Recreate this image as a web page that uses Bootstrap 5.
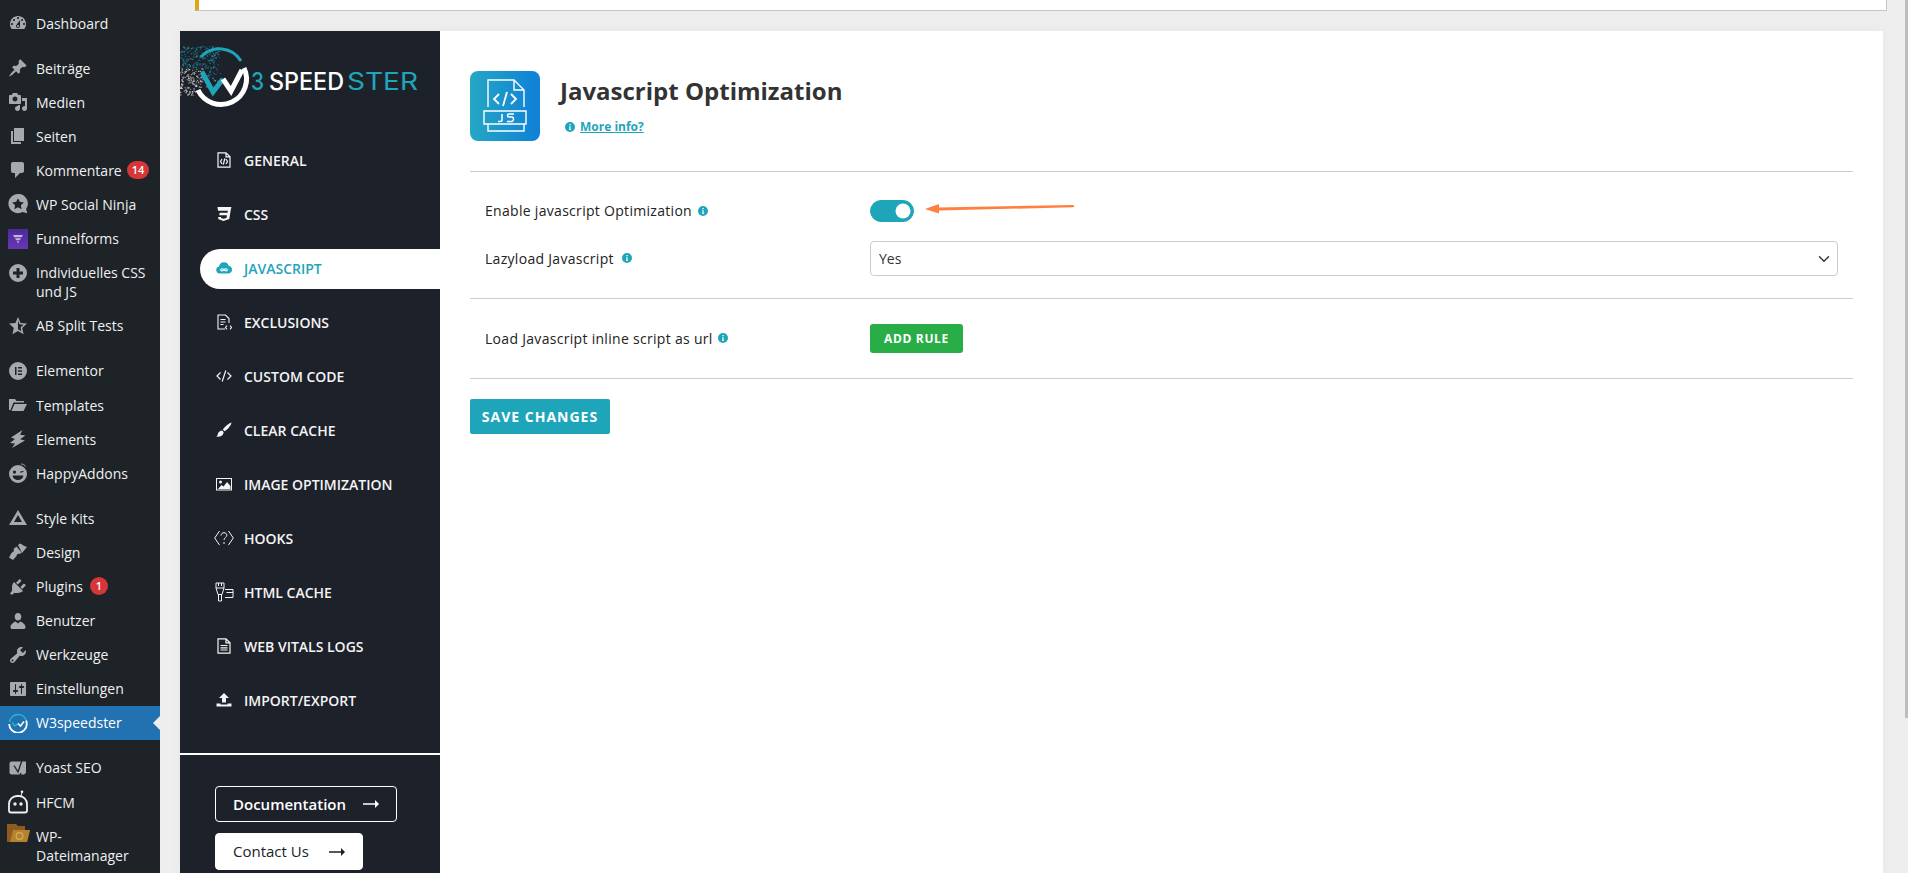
<!DOCTYPE html>
<html lang="de">
<head>
<meta charset="utf-8">
<title>W3speedster</title>
<link href="https://cdn.jsdelivr.net/npm/bootstrap@5.3.0/dist/css/bootstrap.min.css" rel="stylesheet">
<style>
html,body{height:873px;overflow:hidden;}
body{background:#eeeeee;font-family:"Open Sans","Noto Sans",sans-serif;color:#212529;position:relative;}
.wp-side{width:160px;height:873px;background:#1d2327;flex:none;padding-top:6px;overflow:hidden;}
.wp-item{display:flex;color:#f0f0f1;font-size:14px;line-height:19.1px;padding:7.5px 4px 7.5px 36px;position:relative;text-decoration:none;}
.wp-item.sep{margin-top:11px;}
.wp-item .wi{position:absolute;left:8px;top:7px;width:20px;height:20px;fill:#a7aaad;}
.wp-item.on{background:#2271b1;color:#fff;}
.wp-item.on::after{content:"";position:absolute;right:0;top:10px;border:7px solid transparent;border-right-color:#eeeeee;border-left:0;}
.wp-count{display:inline-block;background:#d63638;color:#fff;font-size:11px;font-weight:600;height:18px;line-height:18px;min-width:18px;padding:0 5px;border-radius:9px;text-align:center;margin-left:5px;}
.wp-count.one{padding:0;margin-left:7px;}
.page-wrap{flex:1;min-width:0;padding-left:20px;}
.top-note{margin-left:15px;width:1692px;height:11px;background:#fff;border:1px solid #c3c4c7;border-top:0;border-left:4px solid #dba617;}
.tool-panel{margin-top:20px;width:1703px;height:842px;background:#fff;box-shadow:0 0 12px rgba(0,0,0,.04);}
.tool-nav{width:260px;flex:none;background:#1d212a;height:842px;}
.logo-svg{display:block;margin-top:9px;width:260px;height:70px;}
.tool-links{margin-top:31px;padding-left:20px;gap:14px;}
.tool-link{display:flex;align-items:center;gap:12px;height:40px;padding:0 0 2px 16px;color:#f4f4f4;font-size:14px;font-weight:600;text-decoration:none;border-radius:20px 0 0 20px;white-space:nowrap;}
.tool-link svg{width:16px;height:16px;flex:none;}
.tool-link svg.wide-ico{width:20px;height:20px;margin:0 -2px;}
.tool-link.on{background:#fff;color:#1fa5ba;}
.nav-rule{height:2px;background:#fff;margin-top:32px;}
.doc-box{padding:31px 0 0 35px;gap:11px;}
.doc-btn{display:inline-flex;align-items:center;justify-content:space-between;height:36px;padding:0 17px;border:1px solid #fff;border-radius:4px;color:#fff;font-size:15px;font-weight:600;width:182px;text-decoration:none;}
.doc-btn.fill{background:#fff;color:#1d212a;font-weight:500;width:148px;height:37px;}
.tool-body{flex:1;min-width:0;padding:40px 30px 0 30px;position:relative;}
.js-badge{width:70px;height:70px;border-radius:8px;background:linear-gradient(90deg,#25a7c4,#0f80d8);flex:none;display:flex;align-items:center;justify-content:center;}
.js-title{font-size:24px;font-weight:700;color:#333;line-height:34px;margin:3px 0 0 1px;}
.js-more{font-size:12px;font-weight:700;color:#1fa5ba;margin-left:6px;margin-top:11px;line-height:15px;gap:5px;}
.js-more a{color:#1fa5ba;}
.info-dot{width:10px;height:10px;flex:none;}
.tool-rule{height:1px;background:#ccc;margin:0;opacity:1;border:0;}
.head-row{height:70px;gap:19px;margin-bottom:30px;}
.opt-row{padding:0 15px;}
.opt-row.first{margin-top:28px;}
.opt-row.second{margin-top:19px;}
.opt-row.third{margin-top:25px;}
.tool-rule.after-second{margin-top:22px;}
.tool-rule.after-third{margin-top:25px;}
.opt-label{width:385px;flex:none;font-size:14px;letter-spacing:.3px;color:#222;gap:6px;margin-top:-1px;}
.opt-label.gap-wide{gap:8px;}
.opt-label.gap-thin{gap:5px;}
.opt-switch{width:44px!important;height:22px;margin:0!important;background-color:#1fa5ba!important;border-color:#1fa5ba!important;float:none!important;}
.switch-box{padding:0;margin:0;min-height:0;display:flex;}
.opt-select{height:35px;font-size:14px;padding:0 30px 0 8px;border-color:#ccc;border-radius:4px;color:#333;background-position:right 5px center;flex:1;}
.add-rule{background:#28ad47;color:#fff;font-size:12px;font-weight:700;letter-spacing:.65px;height:29px;width:93px;padding:0;border:0;border-radius:3px;}
.add-rule:hover{background:#28ad47;color:#fff;}
.save-btn{background:#1fa5ba;color:#fff;font-size:14px;font-weight:700;letter-spacing:1px;height:35px;width:140px;padding:0;border:0;border-radius:2px;margin-top:20px;}
.save-btn:hover{background:#1fa5ba;color:#fff;}
.note-arrow{position:absolute;left:485px;top:170px;width:150px;height:14px;}
.page-thumb{position:absolute;right:0;top:0;width:3px;height:718px;background:#bdbdbd;}
</style>
</head>
<body>
<div class="d-flex">
<nav class="wp-side d-flex flex-column">
<a class="wp-item"><svg class="wi" viewBox="0 0 20 20"><path d="M3.76 16h12.48c1.1-1.37 1.76-3.11 1.76-5 0-4.42-3.58-8-8-8s-8 3.58-8 8c0 1.89.66 3.63 1.76 5zM10 4c.55 0 1 .45 1 1s-.45 1-1 1-1-.45-1-1 .45-1 1-1zM6 6c.55 0 1 .45 1 1s-.45 1-1 1-1-.45-1-1 .45-1 1-1zm8 0c.55 0 1 .45 1 1s-.45 1-1 1-1-.45-1-1 .45-1 1-1zm-5.37 5.55L12 7v6c0 1.1-.9 2-2 2s-2-.9-2-2c0-.57.24-1.08.63-1.45zM4 10c.55 0 1 .45 1 1s-.45 1-1 1-1-.45-1-1 .45-1 1-1zm12 0c.55 0 1 .45 1 1s-.45 1-1 1-1-.45-1-1 .45-1 1-1zm-5 3c0-.55-.45-1-1-1s-1 .45-1 1 .45 1 1 1 1-.45 1-1z" fill-rule="evenodd"/></svg>Dashboard</a>
<a class="wp-item sep"><svg class="wi" viewBox="0 0 20 20"><path d="M10.44 3.02l1.82-1.82 6.36 6.35-1.83 1.82c-1.05-.68-2.48-.57-3.41.36l-.75.75c-.92.93-1.04 2.35-.35 3.41l-1.83 1.82-2.41-2.41-2.8 2.79c-.42.42-3.38 2.71-3.8 2.29s1.86-3.39 2.28-3.81l2.79-2.79L4.1 9.36l1.83-1.82c1.05.69 2.48.57 3.4-.36l.75-.75c.93-.92 1.05-2.35.36-3.41z"/></svg>Beiträge</a>
<a class="wp-item"><svg class="wi" viewBox="0 0 20 20"><path d="M13 11V4c0-.55-.45-1-1-1h-1.67L9 1H5L3.67 3H2c-.55 0-1 .45-1 1v7c0 .55.45 1 1 1h10c.55 0 1-.45 1-1zM7 4.5c1.38 0 2.5 1.12 2.5 2.5S8.38 9.5 7 9.5 4.5 8.38 4.5 7 5.62 4.5 7 4.5zM14 6h5v10.5c0 1.38-1.12 2.5-2.5 2.5S14 17.88 14 16.5s1.12-2.5 2.5-2.5c.17 0 .34.02.5.05V9h-3V6zm-4 8.05V13h2v3.5c0 1.38-1.12 2.5-2.5 2.5S7 17.88 7 16.5 8.12 14 9.5 14c.17 0 .34.02.5.05z" fill-rule="evenodd"/></svg>Medien</a>
<a class="wp-item"><svg class="wi" viewBox="0 0 20 20"><path d="M6 15V2h10v13H6zm-1 1h8v2H3V5h2v11z"/></svg>Seiten</a>
<a class="wp-item"><svg class="wi" viewBox="0 0 20 20"><path d="M5 2h9c1.1 0 2 .9 2 2v7c0 1.1-.9 2-2 2h-2l-5 5v-5H5c-1.1 0-2-.9-2-2V4c0-1.1.9-2 2-2z"/></svg>Kommentare<span class="wp-count">14</span></a>
<a class="wp-item"><svg class="wi" viewBox="0 0 20 20"><path d="M10 0a9.6 9.6 0 1 0 4.5 18.1l4.8 1.2-1.2-4.2A9.6 9.6 0 0 0 10 0zm0 4.2l1.8 3.6 4 .6-2.9 2.8.7 4-3.6-1.9-3.6 1.9.7-4-2.9-2.8 4-.6z" fill-rule="evenodd"/></svg>WP Social Ninja</a>
<a class="wp-item"><svg class="wi" viewBox="0 0 20 20"><defs><linearGradient id="ff" x1="0" y1="0" x2="0" y2="1"><stop offset="0" stop-color="#4b2a9b"/><stop offset="1" stop-color="#6a35b5"/></linearGradient></defs><rect width="20" height="20" fill="url(#ff)"/><path d="M5 6h10l-1.2 2.2H6.2zM7 9.2h6l-1.2 2H8.2zM8.8 12.2h2.4L10 14.6z" fill="#c4b5dc"/></svg>Funnelforms</a>
<a class="wp-item"><svg class="wi" viewBox="0 0 20 20"><path d="M10 1a9 9 0 1 0 0 18 9 9 0 0 0 0-18zm-1.5 4h3v3.5H15v3h-3.5V15h-3v-3.5H5v-3h3.5z" fill-rule="evenodd"/></svg><span>Individuelles CSS und JS</span></a>
<a class="wp-item"><svg class="wi" viewBox="0 0 20 20"><path d="M10 1l2.6 6 6.4.6-4.8 4.3 1.4 6.3L10 15l-5.6 3.2 1.4-6.3L1 7.6 7.4 7zM10 4.5v8.8l3.4 2-.9-3.9 3-2.7-4-.4z" fill-rule="evenodd"/></svg>AB Split Tests</a>
<a class="wp-item sep"><svg class="wi" viewBox="0 0 20 20"><path d="M10 1a9 9 0 1 0 0 18 9 9 0 0 0 0-18zM7 6h1.5v8H7zm3 0h4v1.5h-4zm0 3.2h4v1.5h-4zm0 3.3h4V14h-4z" fill-rule="evenodd"/></svg>Elementor</a>
<a class="wp-item"><svg class="wi" viewBox="0 0 20 20"><path d="M1 4h6l1.5 2H16v1.5H5.5L2.5 15H1zM6.5 9H19l-3.5 7H3.500z"/></svg>Templates</a>
<a class="wp-item"><svg class="wi" viewBox="0 0 20 20"><path d="M14.500 1L3 8.500l4 1.500L2 14l5 .5L4 19l13-7.500-5-1.200 5.500-3.800-5.500-.8z"/></svg>Elements</a>
<a class="wp-item"><svg class="wi" viewBox="0 0 20 20"><path d="M10 2a9 9 0 1 0 0 18 9 9 0 0 0 0-18zM6.500 7.500a1.600 1.600 0 1 1 0 3.200 1.600 1.600 0 0 1 0-3.200zm5.500 1.200l3.400-1v1.400l-3.400.6zM4.500 12.500h11c-.4 2.800-2.600 4.600-5.500 4.600s-5.100-1.800-5.500-4.600z" fill-rule="evenodd"/><path d="M13 1c2 0 3.500.8 4.500 2.500" fill="none" stroke="#a7aaad"/></svg>HappyAddons</a>
<a class="wp-item sep"><svg class="wi" viewBox="0 0 20 20"><path d="M10 2l9 15H1zm0 5l-4 7h8z" fill-rule="evenodd"/></svg>Style Kits</a>
<a class="wp-item"><svg class="wi" viewBox="0 0 20 20"><path d="M10 3l2-1.500c2 .4 3 2.500 7 3.500l-5 6zM8.500 4.500l5 6-1.500 1.500-1-.5-2 1-.5 1.500-3.500 4-4-2.500 2.500-4.500 2-1.500.5-1.500-.5-1z"/></svg>Design</a>
<a class="wp-item"><svg class="wi" viewBox="0 0 20 20"><path d="M13.11 4.36L9.87 7.6 8 5.73l3.24-3.24c.35-.34 1.05-.2 1.56.32.52.51.66 1.21.31 1.55zm-8 1.77l.91-1.12 9.01 9.01-1.19.84c-.71.71-2.63 1.16-3.82 1.16H6.14L4.9 17.26c-.59.59-1.54.59-2.12 0-.59-.58-.59-1.53 0-2.12l1.24-1.24v-3.88c0-1.13.4-3.19 1.09-3.89zm7.26 3.97l3.24-3.24c.34-.35 1.04-.21 1.55.31.52.51.66 1.21.31 1.55l-3.24 3.25z"/></svg>Plugins<span class="wp-count one">1</span></a>
<a class="wp-item"><svg class="wi" viewBox="0 0 20 20"><path d="M10 9.500c-1.900 0-3.300-1.700-3.300-3.800S8.100 2 10 2s3.300 1.600 3.300 3.700-1.400 3.800-3.300 3.800zM2.500 16.200c0-3 3.500-5 5-5.600l2.500 2 2.500-2c1.500.6 5 2.600 5 5.600 0 1-.7 1.800-2 1.800h-11c-1.300 0-2-.8-2-1.800z"/></svg>Benutzer</a>
<a class="wp-item"><svg class="wi" viewBox="0 0 20 20"><path d="M16.68 9.77c-1.34 1.34-3.3 1.67-4.95.99l-5.41 6.52c-.99.99-2.59.99-3.58 0s-.99-2.59 0-3.57l6.52-5.42c-.68-1.65-.35-3.61.99-4.95 1.28-1.28 3.12-1.62 4.72-1.06l-2.89 2.89 2.82 2.82 2.86-2.87c.53 1.58.18 3.39-1.08 4.65zM3.81 16.21c.4.39 1.04.39 1.43 0 .4-.4.4-1.04 0-1.43-.39-.4-1.03-.4-1.43 0-.39.39-.39 1.03 0 1.43z" fill-rule="evenodd"/></svg>Werkzeuge</a>
<a class="wp-item"><svg class="wi" viewBox="0 0 20 20"><path d="M18 16V4c0-.55-.45-1-1-1H3c-.55 0-1 .45-1 1v12c0 .55.45 1 1 1h14c.55 0 1-.45 1-1zM8 11h1c.55 0 1 .45 1 1s-.45 1-1 1H8v1.500c0 .28-.22.5-.5.5s-.5-.22-.5-.5V13H6c-.55 0-1-.45-1-1s.45-1 1-1h1V5.500c0-.28.22-.5.5-.5s.5.22.5.5V11zm5-2h-1c-.55 0-1-.45-1-1s.45-1 1-1h1V5.500c0-.28.22-.5.5-.5s.5.22.5.5V7h1c.55 0 1 .45 1 1s-.45 1-1 1h-1v5.500c0 .28-.22.5-.5.5s-.5-.22-.5-.5V9z" fill-rule="evenodd"/></svg>Einstellungen</a>
<a class="wp-item on"><svg class="wi" viewBox="0 0 20 20"><path d="M1.500 9a8.600 8.600 0 0 1 16.500-2" fill="none" stroke="#28b4c8" stroke-width="1.600"/><path d="M1.200 11a8.800 8.800 0 0 0 17.600 0c0-1.500-.3-2.500-.8-3.500" fill="none" stroke="#fff" stroke-width="1.800"/><path d="M4 9.500l3 3.500 3-2.500" fill="none" stroke="#28b4c8" stroke-width="1.600"/><path d="M10 10.500l2.500 2.500 3.500-4.500" fill="none" stroke="#fff" stroke-width="1.600"/></svg>W3speedster</a>
<a class="wp-item sep"><svg class="wi" viewBox="0 0 20 20"><path d="M3.500 3.500h12v13h-12q-2 0-2-2v-9q0-2 2-2z"/><path d="M15 3.500h3v10q0 3-3 3z"/><path d="M6 7.500l4 6.500L14.500 .8M13 15l-1.500 3.500-3 .7" fill="none" stroke="#1d2327" stroke-width="1.300"/></svg>Yoast SEO</a>
<a class="wp-item"><svg class="wi" viewBox="0 0 20 24" style="fill:#f0f0f1;height:24px;top:5px"><path d="M9 6h2a8 8 0 0 1 8 8v6.500q0 2-2 2H3q-2 0-2-2V14a8 8 0 0 1 8-8z" fill="none" stroke="#f0f0f1" stroke-width="1.800"/><circle cx="7" cy="14" r="1.700"/><circle cx="13" cy="14" r="1.700"/><circle cx="14" cy="1.800" r="1.300"/><path d="M14 2.500L13 6" stroke="#f0f0f1"/></svg>HFCM</a>
<a class="wp-item"><svg class="wi" viewBox="0 0 24 20" style="width:24px;left:7px;top:4px"><path d="M0 1h9l2 2h7v4H0zM0 7h23l-3 12H0z" fill="#8f5a1e"/><path d="M6 7h17l-3 12H3z" fill="#b5832b"/><circle cx="12.500" cy="13" r="3.400" fill="none" stroke="#d4ab62" stroke-width="1.200"/></svg><span>WP-<br>Dateimanager</span></a>
</nav>

<div class="page-wrap">
<div class="top-note"></div>
<div class="tool-panel d-flex">
<aside class="tool-nav">
<svg class="logo-svg" id="logo" viewBox="0 0 260 70">
<g id="specks"></g>
<path d="M21 17A25 25 0 0 1 61 21" fill="none" stroke="#1fa5ba" stroke-width="3"/>
<path d="M18 50A25 25 0 0 0 64 28" fill="none" stroke="#fff" stroke-width="5"/>
<path d="M22 32L33 52L43 39" fill="none" stroke="#1fa5ba" stroke-width="5"/>
<path d="M43 39L51 51L62 30" fill="none" stroke="#fff" stroke-width="5"/>
<text x="71" y="50" font-family="Inter,sans-serif" font-size="24" font-weight="500" fill="#1fa5ba" textLength="13" lengthAdjust="spacingAndGlyphs">3</text>
<text x="89" y="50" font-family="Inter,sans-serif" font-size="24" font-weight="500" fill="#fff" textLength="75" lengthAdjust="spacingAndGlyphs">SPEED</text>
<text x="167" y="50" font-family="Inter,sans-serif" font-size="24" font-weight="400" fill="#1fa5ba" textLength="71" lengthAdjust="spacingAndGlyphs">STER</text>
</svg>
<div class="tool-links d-flex flex-column">
<a class="tool-link"><svg viewBox="0 0 16 16" fill="none" stroke="#f4f4f4" stroke-width="1.200"><path d="M2 .8h8l4 4v10.400H2zM10 .8v4h4"/><path d="M6 7L4.500 9.500 6 12M10 7l1.500 2.500L10 12M8.800 6.500l-1.500 6"/></svg>GENERAL</a>
<a class="tool-link"><svg viewBox="0 0 16 16"><path d="M1.500 1h14l-.7 2.500-1.500 9.500L7.500 15l-5-1.700-.5-2.300h3l.2 1 2.300.8 3-.8.400-2.800H3.200l.5-2.500h7.800l.4-2H2z" fill="#f4f4f4"/></svg>CSS</a>
<a class="tool-link on"><svg viewBox="0 0 16 16"><path d="M4 14a3.500 3.500 0 0 1-.8-6.900 4.800 4.800 0 0 1 9.300-.6A3.800 3.800 0 0 1 12.500 14z" fill="#1fa5ba" transform="translate(-.3 -1) scale(1.040)"/><path d="M8 9.800c-1-1.400-3.300-1.400-3.300 0S7 11.200 8 9.800c1-1.400 3.300-1.400 3.300 0S9 11.200 8 9.800z" fill="none" stroke="#fff" stroke-width="1.100"/></svg>JAVASCRIPT</a>
<a class="tool-link"><svg viewBox="0 0 16 16" fill="none" stroke="#f4f4f4" stroke-width="1.100"><path d="M9 15H2V1h7.500L13 4.500V9M4.500 5.500h5M4.500 8h5M4.500 10.500h3"/><path d="M11 11.500L9.500 13.500 11 15.300M14 11.500l1.500 2-1.500 1.800"/></svg>EXCLUSIONS</a>
<a class="tool-link"><svg viewBox="0 0 16 16" fill="none" stroke="#f4f4f4" stroke-width="1.200"><path d="M4.500 4.500L1 8l3.500 3.500M11.500 4.500L15 8l-3.500 3.500M9.800 2.500L6.200 13.500"/></svg>CUSTOM CODE</a>
<a class="tool-link"><svg viewBox="0 0 16 16"><path d="M15.500 .5c-.5 3-3.500 7-7 8.700L6.800 7.500C9 4.500 12.500 1.500 15.500 .5zM6 8.500l1.600 1.600c0 3.200-3 5.400-7.300 4.400 1.700-.6 1.200-2.300 2-3.700C3 9.600 4.500 8.800 6 8.500z" fill="#f4f4f4"/></svg>CLEAR CACHE</a>
<a class="tool-link"><svg viewBox="0 0 16 16"><path d="M0 2h16v12.500H0zm1 1v10.500h14V3z" fill="#f4f4f4" fill-rule="evenodd"/><circle cx="4.500" cy="6" r="1.500" fill="#f4f4f4"/><path d="M2 13l3.500-4 2 1.500L11 6l3.500 4v3z" fill="#f4f4f4"/></svg>IMAGE OPTIMIZATION</a>
<a class="tool-link"><svg class="wide-ico" viewBox="0 0 20 20" fill="none" stroke="#f4f4f4" stroke-width="1"><path d="M5.500 3L.7 10l4.800 7M14.500 3l4.800 7-4.800 7"/><path d="M7 7.500C7.200 5.500 8.500 4.700 10 4.700c1.700 0 2.800 1.100 2.800 2.500 0 2.300-2.800 2.300-2.800 4.800"/><path d="M10 14v2"/></svg>HOOKS</a>
<a class="tool-link"><svg class="wide-ico" viewBox="0 0 20 20" fill="none" stroke="#f4f4f4" stroke-width="1"><path d="M2 1h8v5H2zM4.500 1v3M7.500 1v3M2 6l2 6.500h4L10 6M4.500 12.500V19h3v-6.500M11 7.500h8M19 7.500v8h-8M12.500 10.500H19"/></svg>HTML CACHE</a>
<a class="tool-link"><svg viewBox="0 0 16 16" fill="none" stroke="#f4f4f4" stroke-width="1.200"><path d="M2 .8h8l4 4v10.400H2zM10 .8v4h4"/><path d="M4.500 7.500h7M4.500 9.800h7M4.500 12h7"/></svg>WEB VITALS LOGS</a>
<a class="tool-link"><svg viewBox="0 0 16 16"><path d="M8 1l5 5h-3v4.500H6V6H3z" fill="#f4f4f4"/><path d="M.5 11.500H4.500v1h7v-1h4v3H.5z" fill="#f4f4f4"/></svg>IMPORT/EXPORT</a>
</div>
<div class="nav-rule"></div>
<div class="doc-box d-flex flex-column align-items-start">
<a class="doc-btn">Documentation<svg width="16" height="10" viewBox="0 0 16 10"><path d="M0 4.200h12V1l4 4-4 4V5.800H0z" fill="#fff"/></svg></a>
<a class="doc-btn fill">Contact Us<svg width="16" height="10" viewBox="0 0 16 10"><path d="M0 4.200h12V1l4 4-4 4V5.800H0z" fill="#1d212a"/></svg></a>
</div>
</aside>

<main class="tool-body">
<div class="head-row d-flex">
<div class="js-badge"><svg width="44" height="54" viewBox="0 0 44 54" fill="none" stroke="#fff" stroke-width="1.400"><path d="M5 28V1h26l10 10v17M31 1v10h10M5 45v7h36v-7"/><path d="M1 32h42v13H1z"/><path d="M16 15l-5 5 5 5M28 15l5 5-5 5M24 13l-4 14" stroke-width="1.800"/><path d="M19 35v6q0 1.500-2 1.500h-2M31 35h-5q-1.500 0-1.500 1.500t1.500 1.500h3q1.500 0 1.500 2t-1.500 2.500h-5" stroke-width="1.500"/></svg></div>
<div>
<h1 class="js-title">Javascript Optimization</h1>
<div class="js-more d-flex align-items-center"><svg class="info-dot" viewBox="0 0 10 10"><circle cx="5" cy="5" r="5" fill="#1fa5ba"/><path d="M4.200 4.300h1.400V7.500h.6v.6H3.900v-.6h.5V4.900h-.2zM4.400 2h1.300v1.300H4.400z" fill="#fff"/></svg><a href="#">More info?</a></div>
</div>
</div>
<hr class="tool-rule">
<div class="opt-row first d-flex align-items-center">
<div class="opt-label d-flex align-items-center">Enable javascript Optimization<svg class="info-dot" viewBox="0 0 10 10"><circle cx="5" cy="5" r="5" fill="#1fa5ba"/><path d="M4.200 4.300h1.400V7.500h.6v.6H3.900v-.6h.5V4.900h-.2zM4.400 2h1.300v1.300H4.400z" fill="#fff"/></svg></div>
<div class="form-check form-switch switch-box"><input class="form-check-input opt-switch" type="checkbox" role="switch" checked aria-label="Enable javascript Optimization"></div>
</div>
<div class="opt-row second d-flex align-items-center">
<div class="opt-label gap-wide d-flex align-items-center">Lazyload Javascript<svg class="info-dot" viewBox="0 0 10 10"><circle cx="5" cy="5" r="5" fill="#1fa5ba"/><path d="M4.200 4.300h1.400V7.500h.6v.6H3.900v-.6h.5V4.900h-.2zM4.400 2h1.300v1.300H4.400z" fill="#fff"/></svg></div>
<select class="form-select opt-select" aria-label="Lazyload Javascript"><option>Yes</option><option>No</option></select>
</div>
<hr class="tool-rule after-second">
<div class="opt-row third d-flex align-items-center">
<div class="opt-label gap-thin d-flex align-items-center">Load Javascript inline script as url<svg class="info-dot" viewBox="0 0 10 10"><circle cx="5" cy="5" r="5" fill="#1fa5ba"/><path d="M4.200 4.300h1.400V7.500h.6v.6H3.900v-.6h.5V4.900h-.2zM4.400 2h1.300v1.300H4.400z" fill="#fff"/></svg></div>
<button type="button" class="btn add-rule">ADD RULE</button>
</div>
<hr class="tool-rule after-third">
<button type="button" class="btn save-btn">SAVE CHANGES</button>
<svg class="note-arrow" viewBox="0 0 150 14"><path d="M14 3L0 8l14 4.500V9.500l134-3.200a1 1 0 0 0 0-2.300L14 6.500z" fill="#ff7f3f"/></svg>
</main>
</div>
</div>
</div>
<div class="page-thumb"></div>
<script>
(function(){
  var g=document.getElementById('specks'),s=7,out='';
  function r(){s=(s*16807)%2147483647;return s/2147483647;}
  for(var i=0;i<520;i++){
    var x=r()*40,y=6+r()*50;
    var white=y>28&&x<26||y>38;
    if(x+(white?12:0)>40-Math.abs(y-14)*.25 && r()>.2) continue;
    if(y>48&&x>16) continue;
    out+='<rect x="'+x.toFixed(1)+'" y="'+y.toFixed(1)+'" width="1.2" height="1.2" fill="'+(white?'#d8d8d8':'#1b8b9e')+'" opacity="'+(.4+r()*.6).toFixed(2)+'"/>';
  }
  g.innerHTML=out;
})();
</script>
</body>
</html>
